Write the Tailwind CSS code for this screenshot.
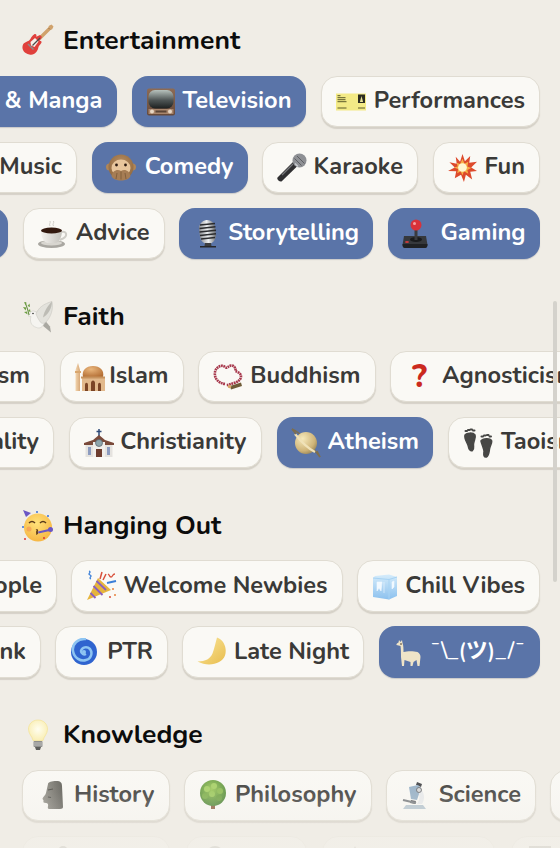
<!DOCTYPE html>
<html>
<head>
<meta charset="utf-8">
<script src="https://cdn.jsdelivr.net/npm/@tailwindcss/browser@4"></script>
</head>
<body class="bg-[#f0ede6]">
<svg class="absolute w-0 h-0" aria-hidden="true"><defs>
<linearGradient id="screen" x1="0" y1="0" x2="0" y2="1"><stop offset="0" stop-color="#b7c2bd"/><stop offset="0.55" stop-color="#4e5555"/><stop offset="1" stop-color="#1d2020"/></linearGradient>
<linearGradient id="wood" x1="0" y1="0" x2="0" y2="1"><stop offset="0" stop-color="#8d6b55"/><stop offset="1" stop-color="#66493a"/></linearGradient>
<radialGradient id="dome" cx="0.4" cy="0.3" r="0.8"><stop offset="0" stop-color="#eab67c"/><stop offset="1" stop-color="#b06a30"/></radialGradient>
<linearGradient id="tan" x1="0" y1="0" x2="1" y2="0"><stop offset="0" stop-color="#f3d5ae"/><stop offset="1" stop-color="#d7a878"/></linearGradient>
<radialGradient id="planet" cx="0.35" cy="0.3" r="0.85"><stop offset="0" stop-color="#f6e9bb"/><stop offset="0.65" stop-color="#cfb478"/><stop offset="1" stop-color="#85744a"/></radialGradient>
<radialGradient id="face" cx="0.45" cy="0.35" r="0.75"><stop offset="0" stop-color="#ffe27a"/><stop offset="1" stop-color="#f5b03c"/></radialGradient>
<linearGradient id="ice" x1="0" y1="0" x2="0" y2="1"><stop offset="0" stop-color="#d5ecfb"/><stop offset="1" stop-color="#8cc1ee"/></linearGradient>
<linearGradient id="moon" x1="0" y1="0" x2="1" y2="1"><stop offset="0" stop-color="#fbe9a0"/><stop offset="1" stop-color="#e8bc4c"/></linearGradient>
<radialGradient id="bulb" cx="0.5" cy="0.45" r="0.6"><stop offset="0" stop-color="#fffef0"/><stop offset="1" stop-color="#f9edb0"/></radialGradient>
<linearGradient id="stone" x1="0" y1="0" x2="1" y2="0"><stop offset="0" stop-color="#94928a"/><stop offset="1" stop-color="#5b5a54"/></linearGradient>
<radialGradient id="tree" cx="0.45" cy="0.35" r="0.75"><stop offset="0" stop-color="#9cc858"/><stop offset="1" stop-color="#3f7a2f"/></radialGradient>
<radialGradient id="monkey" cx="0.5" cy="0.4" r="0.7"><stop offset="0" stop-color="#bd9468"/><stop offset="1" stop-color="#8a6238"/></radialGradient>
<linearGradient id="mic" x1="0" y1="0" x2="1" y2="0"><stop offset="0" stop-color="#8e9094"/><stop offset="0.5" stop-color="#eef0f2"/><stop offset="1" stop-color="#6d6f73"/></linearGradient>
<linearGradient id="cup" x1="0" y1="0" x2="1" y2="0"><stop offset="0" stop-color="#f4f2ee"/><stop offset="1" stop-color="#c4c2bc"/></linearGradient>
</defs></svg>

<main class="relative w-[560px] h-[848px] overflow-hidden bg-[#f0ede6] font-['Nunito','Noto_Sans','Noto_Sans_CJK_JP',sans-serif] pt-[22px]">

  <section>
    <h2 class="flex items-center h-9 mb-[18px] pl-[22px] gap-[9px] text-[26.500px] font-bold text-[#0c0c0c]">
      <svg class="w-8 h-8 shrink-0" viewBox="0 0 32 32"><path d="M31.500 2.500L29.500.5l-2.500 1.300-.8 1.700L16 13.500l2.500 2.500L28.500 6l1.700-.8z" fill="#d0a26c"/><path d="M27 4.500l.7.7" stroke="#6b4a2a" stroke-width="1"/><path d="M12 10.500c1.700-1.200 3 .3 2.300 2.200l3.700-1.700 2 2-2.500 3.800c1.700-.3 2.600 1 1.800 2.300-1.100 1.900-2.500 2.200-3 4.700-.7 3.300-3.500 8-9 6.700C2.500 29.500 0 26 .5 22.500c.5-4 3.800-4.500 5.800-5.500C8.800 15.700 9 12.500 12 10.500z" fill="#e0403c"/><path d="M8.500 18l4.500-4 3.500 3.500-4 5.500-3.500-1.500z" fill="#f7f1ea"/><path d="M10.500 21.500L18 14" stroke="#4b4b4b" stroke-width="1.200"/><path d="M6 20l5.500 5.500" stroke="#8c8c8c" stroke-width="1.600"/></svg>
      <span class="pt-[2px]">Entertainment</span>
    </h2>
    <div class="flex flex-col gap-[15px]">
      <div class="flex gap-[15px] -ml-[150px]">
        <div class="flex items-center justify-end shrink-0 w-[266.500px] h-[51px] rounded-[16px] bg-[#5a74a8] text-white px-[14px] text-[23.600px] font-bold whitespace-nowrap shadow-[0_1px_1px_rgba(50,60,90,0.2)]"><span class="pb-[1px]">Anime &amp; Manga</span></div>
        <div class="flex items-center justify-between shrink-0 w-[174px] h-[51px] rounded-[16px] bg-[#5a74a8] text-white px-[14px] text-[23.600px] font-bold whitespace-nowrap shadow-[0_1px_1px_rgba(50,60,90,0.2)]">
          <svg class="w-[30px] h-[30px] shrink-0" viewBox="0 0 30 30"><rect x="1" y="1.500" width="28" height="27" rx="2" fill="url(#wood)"/><rect x="2.500" y="3" width="25" height="18.500" rx="6.500" fill="url(#screen)"/><rect x="2.500" y="22" width="25" height="5" fill="#a9866c"/><circle cx="6" cy="24.500" r="2" fill="#e7d6c3"/><circle cx="24" cy="24.500" r="2" fill="#e7d6c3"/><rect x="9.500" y="23.500" width="11" height="2" fill="#5a4436"/></svg>
          <span class="pb-[1px]">Television</span>
        </div>
        <div class="flex items-center justify-between shrink-0 w-[219.500px] h-[51px] rounded-[16px] border border-[#e0dcd2] bg-[#faf9f5] text-[#3a3a38] px-[14px] text-[23.600px] font-bold whitespace-nowrap shadow-[0_2px_1px_rgba(120,110,90,0.22)]">
          <svg class="w-[30px] h-[30px] shrink-0" viewBox="0 0 30 30"><rect x="0" y="6.500" width="30" height="17" fill="#f3ea86"/><rect x="22" y="7.500" width="7" height="8.500" fill="#2c2c22"/><path d="M25.500 9l-1.600 6h3.200z" fill="#e8e39a"/><path d="M1.500 8.700h3M1.500 10.700h8M1.500 12.700h8M1.500 14.700h9M1.500 21h9M22 21h7" stroke="#5c5a2a" stroke-width="1"/></svg>
          <span class="pb-[1px]">Performances</span>
        </div>
      </div>

      <div class="flex gap-[14.500px] -ml-[60px]">
        <div class="flex items-center justify-end shrink-0 w-[137px] h-[51px] rounded-[16px] border border-[#e0dcd2] bg-[#faf9f5] text-[#3a3a38] px-[14px] text-[23.600px] font-bold whitespace-nowrap shadow-[0_2px_1px_rgba(120,110,90,0.22)]"><span class="pb-[1px]">Music</span></div>
        <div class="flex items-center justify-between shrink-0 w-[156px] h-[51px] rounded-[16px] bg-[#5a74a8] text-white px-[14px] text-[23.600px] font-bold whitespace-nowrap shadow-[0_1px_1px_rgba(50,60,90,0.2)]">
          <svg class="w-[30px] h-[30px] shrink-0" viewBox="0 0 30 30"><circle cx="3.500" cy="14" r="3.500" fill="#b08658"/><circle cx="26.500" cy="14" r="3.500" fill="#b08658"/><circle cx="15" cy="14" r="12.500" fill="url(#monkey)"/><ellipse cx="15" cy="15" rx="9.500" ry="8.500" fill="#e8c69c"/><circle cx="10.500" cy="12" r="1.400" fill="#2b1a10"/><circle cx="19.500" cy="12" r="1.400" fill="#2b1a10"/><path d="M5.500 23c1-5 5.500-7.500 9.500-5 4-2.500 8.500 0 9.500 5-2 6-17 6-19 0z" fill="#a67d54"/><path d="M15 18.500v8M11 20l-1 6M19 20l1 6" stroke="#7a5836" stroke-width=".8"/></svg>
          <span class="pb-[1px]">Comedy</span>
        </div>
        <div class="flex items-center justify-between shrink-0 w-[156px] h-[51px] rounded-[16px] border border-[#e0dcd2] bg-[#faf9f5] text-[#3a3a38] px-[14px] text-[23.600px] font-bold whitespace-nowrap shadow-[0_2px_1px_rgba(120,110,90,0.22)]">
          <svg class="w-[30px] h-[30px] shrink-0" viewBox="0 0 30 30"><path d="M17 8L.5 24.500c-.8 1.500 1.500 4.500 4 4L21 12.500z" fill="#2f2f31"/><path d="M16 11L5 22" stroke="#77787b" stroke-width="1.200"/><circle cx="22.500" cy="7.500" r="7" fill="#8e9094"/><path d="M17.500 5.500l7 7M20 3l7.500 7.500" stroke="#5d5f63" stroke-width="1"/><path d="M18 10.500l3 3" stroke="#c9ccd0" stroke-width="1.500"/></svg>
          <span class="pb-[1px]">Karaoke</span>
        </div>
        <div class="flex items-center justify-between shrink-0 w-[107.500px] h-[51px] rounded-[16px] border border-[#e0dcd2] bg-[#faf9f5] text-[#3a3a38] px-[14px] text-[23.600px] font-bold whitespace-nowrap shadow-[0_2px_1px_rgba(120,110,90,0.22)]">
          <svg class="w-[29px] h-[29px] shrink-0" viewBox="0 0 30 30"><path d="M15 1l2.500 7.500L23 3l-1 7 8-1-6 6 6 3.500-7 1 2 8-6.500-5-2 7.500-3-7.500L7 26l1.500-7L0 18.500 7 15 1.500 9.500 9 11 8 4l4.500 5z" fill="#dd4a2c"/><path d="M15 6l2 5 4-2-1 5 4 1.500-4 2 1 4-4.500-2.500-1.500 4-2-4-3.500 2 1-4.500L6 15l4-1-1-4 3.500 1.500z" fill="#f7b048"/><circle cx="15" cy="15" r="4.500" fill="#fff6d0"/></svg>
          <span class="pb-[1px]">Fun</span>
        </div>
      </div>

      <div class="flex gap-[14.500px] -ml-[100px]">
        <div class="shrink-0 w-[108px] h-[51px] rounded-[16px] bg-[#5a74a8] shadow-[0_1px_1px_rgba(50,60,90,0.2)]"></div>
        <div class="flex items-center justify-between shrink-0 w-[142px] h-[51px] rounded-[16px] border border-[#e0dcd2] bg-[#faf9f5] text-[#3a3a38] px-[14px] text-[23.600px] font-bold whitespace-nowrap shadow-[0_2px_1px_rgba(120,110,90,0.22)]">
          <svg class="w-[30px] h-[30px] shrink-0" viewBox="0 0 30 30"><ellipse cx="13.500" cy="25" rx="13.500" ry="4" fill="#a9a7a1"/><ellipse cx="13.500" cy="24" rx="10.500" ry="2.500" fill="#d8d6d0"/><path d="M3 11.500h21c0 6.500-3 12-6.500 12.500h-8C6 23.500 3 18 3 11.500z" fill="url(#cup)"/><path d="M24 13c4.500-1.500 6 4 1 6.500l-3.500 1.500" fill="none" stroke="#cfcdc7" stroke-width="2"/><ellipse cx="13.500" cy="11.500" rx="10.500" ry="3" fill="#33190e"/><path d="M12 7c-1.500-2 1-3 0-5M15.500 7c-1.500-2 1-3 0-5" stroke="#d0cec8" stroke-width="1" fill="none"/></svg>
          <span class="pb-[1px]">Advice</span>
        </div>
        <div class="flex items-center justify-between shrink-0 w-[194px] h-[51px] rounded-[16px] bg-[#5a74a8] text-white px-[14px] text-[23.600px] font-bold whitespace-nowrap shadow-[0_1px_1px_rgba(50,60,90,0.2)]">
          <svg class="w-[30px] h-[30px] shrink-0" viewBox="0 0 30 30"><rect x="6.500" y="1" width="16" height="24" rx="8" transform="rotate(-6 14 13)" fill="url(#mic)"/><path d="M7 6l15-1.500M6.500 9.500l16-1.700M6.500 13l16.500-1.700M7 16.500l16-1.700M8 20l14-1.500" stroke="#2b2c2f" stroke-width="1.600"/><path d="M12 24h6l.5 3h-7z" fill="#3c3d40"/><rect x="7" y="27" width="16" height="1.500" fill="#26272a"/></svg>
          <span class="pb-[1px]">Storytelling</span>
        </div>
        <div class="flex items-center justify-between shrink-0 w-[152px] h-[51px] rounded-[16px] bg-[#5a74a8] text-white px-[14px] text-[23.600px] font-bold whitespace-nowrap shadow-[0_1px_1px_rgba(50,60,90,0.2)]">
          <svg class="w-[26px] h-[30px] shrink-0" viewBox="0 0 26 30"><path d="M2 17h22l1.500 9c0 2-1 3-2.500 3H3c-1.500 0-2.500-1-2.500-3z" fill="#36383c"/><path d="M.5 25h25c0 2.500-1 4-2.500 4H3c-1.500 0-2.500-1.500-2.500-4z" fill="#202124"/><ellipse cx="14" cy="20.500" rx="6" ry="2.500" fill="#1a1b1d"/><rect x="12.500" y="8" width="3" height="13" fill="#3a3b3f"/><circle cx="14" cy="6" r="5.500" fill="#d9323a"/><circle cx="12.500" cy="4.500" r="1.500" fill="#f7a0a0"/><ellipse cx="5" cy="23" rx="2" ry="1" fill="#cf3b3b"/></svg>
          <span class="pb-[1px]">Gaming</span>
        </div>
      </div>
    </div>
  </section>

  <section class="mt-[39.500px]">
    <h2 class="flex items-center h-9 mb-[16.500px] pl-[22px] gap-[9px] text-[26.500px] font-bold text-[#0c0c0c]">
      <svg class="w-8 h-8 shrink-0" viewBox="0 0 32 32"><path d="M20 24l9 7.500-1-6-5-6z" fill="#a9a8a1"/><path d="M8 13c0-2.500 3-4 5-2.500 2 1 4 1.500 6 2.500 4 2 5 6 3 10-1.500 3-4 5-7.500 3.500C9 25 7.500 20 9 15.500L6 15z" fill="#f5f4f0" stroke="#cfcec7" stroke-width=".6"/><path d="M14 13C16 7 22 2.500 30 .5c1.500 7.500-1 15.500-6 20.500-2 2-5 1.500-6-.5-1.500-2-3-5-4-7.500z" fill="#e3e2dc" stroke="#c9c8c1" stroke-width=".6"/><path d="M30 .5c-3 3-8 9-9 16 5-3 9-9 9-16z" fill="#bdbcb5"/><circle cx="11" cy="12.500" r=".8" fill="#333"/><path d="M3 1l2.500 7 1.500 6" stroke="#5e8a3a" stroke-width="1" fill="none"/><path d="M2 1.500l2.500 0-.5 3zM1 6l3.500.5-1 3zM7.500 2.500l.5 3.500-2.500-1zM8 8l.5 3-2.500-1zM2 11l3-.5.5 3z" fill="#6fa044"/></svg>
      <span>Faith</span>
    </h2>
    <div class="flex flex-col gap-[15px]">
      <div class="flex gap-[14.500px] -ml-[100px]">
        <div class="flex items-center justify-end shrink-0 w-[145px] h-[51px] rounded-[16px] border border-[#e0dcd2] bg-[#faf9f5] text-[#3a3a38] px-[14px] text-[23.600px] font-bold whitespace-nowrap shadow-[0_2px_1px_rgba(120,110,90,0.22)]"><span class="pb-[1px]">Judaism</span></div>
        <div class="flex items-center justify-between shrink-0 w-[124px] h-[51px] rounded-[16px] border border-[#e0dcd2] bg-[#faf9f5] text-[#3a3a38] px-[14px] text-[23.600px] font-bold whitespace-nowrap shadow-[0_2px_1px_rgba(120,110,90,0.22)]">
          <svg class="w-[30px] h-[30px] shrink-0" viewBox="0 0 30 30"><path d="M3 1l2 7v21H.5V8z" fill="url(#tan)"/><rect x="0" y="9" width="6" height="2" fill="#d9a66d"/><rect x="7" y="15" width="23" height="14" fill="#e2b98c"/><path d="M8 15c-1.500-7 3-11 10-11s11.500 4 10 11z" fill="url(#dome)"/><rect x="6" y="14.500" width="24" height="2" fill="#c7935e"/><path d="M10 29v-6c0-3 3-3 3 0v6zM16 29v-8c0-3.500 4-3.500 4 0v8zM23 29v-6c0-3 3-3 3 0v6z" fill="#7b4526"/></svg>
          <span class="pb-[1px]">Islam</span>
        </div>
        <div class="flex items-center justify-between shrink-0 w-[177.500px] h-[51px] rounded-[16px] border border-[#e0dcd2] bg-[#faf9f5] text-[#3a3a38] px-[14px] text-[23.600px] font-bold whitespace-nowrap shadow-[0_2px_1px_rgba(120,110,90,0.22)]">
          <svg class="w-[30px] h-[30px] shrink-0" viewBox="0 0 30 30"><path d="M12 22C5 21 1 16 2 10c1-5 7-8 10-5 2 2 3-1 6-1.500 3-.5 5 3 4.500 5.500 2 1 5.500 2 5.500 5.500 0 3-3 5.500-7 6.500-3 1-5.500 2-7.500 2" fill="none" stroke="#a7384c" stroke-width="2.600" stroke-dasharray="1.800 .6"/><path d="M17 24l11-3.500 1 3.500-11 3.500z" fill="#6f5c38"/><circle cx="16.500" cy="24.500" r="1.800" fill="#d9a86b"/></svg>
          <span class="pb-[1px]">Buddhism</span>
        </div>
        <div class="flex items-center shrink-0 w-[230px] h-[51px] rounded-[16px] border border-[#e0dcd2] bg-[#faf9f5] text-[#3a3a38] pl-[21px] text-[23.600px] font-bold whitespace-nowrap shadow-[0_2px_1px_rgba(120,110,90,0.22)]">
          <span class="text-[#cb2a1e] text-[32px] font-extrabold w-[30px] shrink-0">?</span>
          <span class="shrink-0 pb-[1px]">Agnosticism</span>
        </div>
      </div>
      <div class="flex gap-[15px] -ml-[100px]">
        <div class="flex items-center justify-end shrink-0 w-[154px] h-[51px] rounded-[16px] border border-[#e0dcd2] bg-[#faf9f5] text-[#3a3a38] px-[14px] text-[23.600px] font-bold whitespace-nowrap shadow-[0_2px_1px_rgba(120,110,90,0.22)]"><span class="pb-[1px]">Spirituality</span></div>
        <div class="flex items-center justify-between shrink-0 w-[192.500px] h-[51px] rounded-[16px] border border-[#e0dcd2] bg-[#faf9f5] text-[#3a3a38] px-[14px] text-[23.600px] font-bold whitespace-nowrap shadow-[0_2px_1px_rgba(120,110,90,0.22)]">
          <svg class="w-[30px] h-[30px] shrink-0" viewBox="0 0 30 30"><path d="M15 1v7M12.500 3.500h5" stroke="#2e4a78" stroke-width="1.500"/><path d="M0 15l9-3 6-5 6 5 9 3v2H0z" fill="#7a4a3a"/><rect x="1.500" y="17" width="27" height="12" fill="#e5e3df"/><rect x="9" y="14" width="12" height="15" fill="#f1efec"/><circle cx="15" cy="15" r="3.500" fill="#8fa6ad" stroke="#55606a" stroke-width=".7"/><rect x="12" y="21" width="6" height="8" fill="#6d3d2f"/><path d="M4 19h3v8H4zM23 19h3v8h-3z" fill="#8d9cc0"/></svg>
          <span class="pb-[1px]">Christianity</span>
        </div>
        <div class="flex items-center justify-between shrink-0 w-[156.500px] h-[51px] rounded-[16px] bg-[#5a74a8] text-white px-[14px] text-[23.600px] font-bold whitespace-nowrap shadow-[0_1px_1px_rgba(50,60,90,0.2)]">
          <svg class="w-[30px] h-[30px] shrink-0" viewBox="0 0 30 30"><path d="M1 1c5 2 12 8 15 12s10 12 13 16" fill="none" stroke="#7d6e4e" stroke-width="1.500"/><circle cx="15" cy="15" r="11" fill="url(#planet)"/><path d="M4 6c4 5 12 14 20 18" fill="none" stroke="#f0e2b8" stroke-width="2.200"/><path d="M26 23l3 6M1 1l4 5" stroke="#7d6e4e" stroke-width="1.500"/></svg>
          <span class="pb-[1px]">Atheism</span>
        </div>
        <div class="flex items-center shrink-0 w-[150px] h-[51px] rounded-[16px] border border-[#e0dcd2] bg-[#faf9f5] text-[#3a3a38] pl-[14px] text-[23.600px] font-bold whitespace-nowrap shadow-[0_2px_1px_rgba(120,110,90,0.22)]">
          <svg class="w-[30px] h-[30px] shrink-0" viewBox="0 0 30 30"><path d="M2 7c1-2 8-3 10 0 1 3-1 5-1.500 9-.3 2.500 1 5-1 6.500-2 1-3.500-1-4-3.500C5 15 1 12 2 7z" fill="#474745" stroke="#474745" stroke-width="1.500"/><path d="M18 13c2-3 9-3 10.500-.5 1 2-1.500 5-2 8.500-.5 3-.5 7-3 8-2.500.5-3-2-2.500-4.500.5-3-2-7-3-11.500z" fill="#474745" stroke="#474745" stroke-width="1.500"/><path d="M2.500 3h1.500M5 2h1.500M7.500 1.500h1.500M10 2.500h1.500M18.500 8.500h1.500M21 7.500h1.500M24 7h1.500M26.500 8.500h1.500" stroke="#474745" stroke-width="2" stroke-linecap="round"/></svg>
          <span class="shrink-0 ml-[8px] pb-[1px]">Taoism</span>
        </div>
      </div>
    </div>
  </section>

  <section class="mt-[39.500px]">
    <h2 class="flex items-center h-9 mb-[16.500px] pl-[22px] gap-[9px] text-[26.500px] font-bold text-[#0c0c0c]">
      <svg class="w-8 h-8 shrink-0" viewBox="0 0 32 32"><circle cx="16" cy="17.500" r="14" fill="url(#face)"/><path d="M1 0l8 3-5 4z" fill="#6a56c4"/><path d="M7 13c2-2 4-2 6 0M18 13c2-2 4-2 6 0" stroke="#5b3a1a" stroke-width="1.500" fill="none"/><path d="M14 20c2-1 2 2 0 2 2 0 2 2 0 2" stroke="#5b3a1a" stroke-width="1.300" fill="none"/><path d="M16 21.500l11-2.500.5 2-11 2.500z" fill="#6a56c4"/><circle cx="28.500" cy="19.500" r="2.500" fill="#6a56c4"/><circle cx="7" cy="19" r="2.500" fill="#f0734e" fill-opacity=".4"/><circle cx="3" cy="29" r="1" fill="#d33"/><circle cx="22" cy="28" r="1" fill="#d33"/><circle cx="26" cy="6" r="1" fill="#3a6fd8"/><circle cx="15" cy="2" r="1" fill="#3a6fd8"/><circle cx="1" cy="17" r="1" fill="#3a6fd8"/></svg>
      <span>Hanging Out</span>
    </h2>
    <div class="flex flex-col gap-[14.500px]">
      <div class="flex gap-[14px] -ml-[100px]">
        <div class="flex items-center justify-end shrink-0 w-[157px] h-[51.500px] rounded-[16px] border border-[#e0dcd2] bg-[#faf9f5] text-[#3a3a38] px-[14px] text-[23.600px] font-bold whitespace-nowrap shadow-[0_2px_1px_rgba(120,110,90,0.22)]"><span class="pb-[1px]">People</span></div>
        <div class="flex items-center justify-between shrink-0 w-[271.500px] h-[51.500px] rounded-[16px] border border-[#e0dcd2] bg-[#faf9f5] text-[#3a3a38] px-[14px] text-[23.600px] font-bold whitespace-nowrap shadow-[0_2px_1px_rgba(120,110,90,0.22)]">
          <svg class="w-[32px] h-[32px] shrink-0" viewBox="0 0 32 32"><path d="M1 30L12 8l13 12z" fill="#e6b53c"/><path d="M4.500 23l5 5M7.500 16l9 9M10.500 11l9.500 9" stroke="#8a5fc0" stroke-width="1.800"/><path d="M3 1c3 1-2 3 1 4s-2 3 1 4" stroke="#3b7fd8" stroke-width="1.300" fill="none"/><path d="M14 9l2-7M17 10l3-6" stroke="#d8503b" stroke-width="1.500"/><path d="M22 4c2 1 1 3 3 3s1-3 4-3" stroke="#d8503b" stroke-width="1.300" fill="none"/><path d="M21 13l9-2" stroke="#3b7fd8" stroke-width="1.800"/><circle cx="27" cy="19" r="1" fill="#e6823c"/><circle cx="29" cy="25" r="1" fill="#e6823c"/><circle cx="24" cy="27" r="1" fill="#d8503b"/></svg>
          <span class="pb-[1px]">Welcome Newbies</span>
        </div>
        <div class="flex items-center justify-between shrink-0 w-[183.500px] h-[51.500px] rounded-[16px] border border-[#e0dcd2] bg-[#faf9f5] text-[#3a3a38] px-[14px] text-[23.600px] font-bold whitespace-nowrap shadow-[0_2px_1px_rgba(120,110,90,0.22)]">
          <svg class="w-[26px] h-[30px] shrink-0" viewBox="0 0 26 30"><path d="M3 5l14-1.500L25 6v19l-8 3.500L1 26V7z" fill="url(#ice)"/><path d="M1 7l16 1.500L25 6M17 8.500v20" stroke="#a7d3f3" stroke-width="1" fill="none"/><path d="M5 11v9l2-3 2 3 1-9zM12 11v11M20 11v7l2-2v-6z" fill="#f1f9ff" stroke="#f1f9ff" stroke-width=".6"/></svg>
          <span class="pb-[1px]">Chill Vibes</span>
        </div>
      </div>
      <div class="flex gap-[14px] -ml-[100px]">
        <div class="flex items-center justify-end shrink-0 w-[141px] h-[51.500px] rounded-[16px] border border-[#e0dcd2] bg-[#faf9f5] text-[#3a3a38] px-[14px] text-[23.600px] font-bold whitespace-nowrap shadow-[0_2px_1px_rgba(120,110,90,0.22)]"><span class="pb-[1px]">Drink</span></div>
        <div class="flex items-center justify-between shrink-0 w-[113px] h-[51.500px] rounded-[16px] border border-[#e0dcd2] bg-[#faf9f5] text-[#3a3a38] px-[14px] text-[23.600px] font-bold whitespace-nowrap shadow-[0_2px_1px_rgba(120,110,90,0.22)]">
          <svg class="w-[28px] h-[28px] shrink-0" viewBox="0 0 28 28"><circle cx="14" cy="14" r="13" fill="#2f64cf"/><path d="M16 1c-8-1-14 5-13 12 1 7 8 11 13 9 5-1 7-7 4-11-3-3-8-2-9 2 0 3 3 4 5 3" fill="none" stroke="#8ec5f2" stroke-width="2.500"/><circle cx="14" cy="14" r="2" fill="#8ec5f2"/></svg>
          <span class="pb-[1px]">PTR</span>
        </div>
        <div class="flex items-center justify-between shrink-0 w-[182px] h-[51.500px] rounded-[16px] border border-[#e0dcd2] bg-[#faf9f5] text-[#3a3a38] px-[14px] text-[23.600px] font-bold whitespace-nowrap shadow-[0_2px_1px_rgba(120,110,90,0.22)]">
          <svg class="w-[30px] h-[30px] shrink-0" viewBox="0 0 30 30"><path d="M20 .5c8 3 10 12 8 18-3 8-16 12-27.500 6 8 0 13-3 15-8 2-5 3-11 4.500-16z" fill="url(#moon)"/></svg>
          <span class="pb-[1px]">Late Night</span>
        </div>
        <div class="flex items-center justify-between shrink-0 ml-[1px] w-[160.500px] h-[51.500px] rounded-[16px] bg-[#5a74a8] text-white pl-[16px] pr-[14px] text-[22px] font-semibold whitespace-nowrap shadow-[0_1px_1px_rgba(50,60,90,0.2)]">
          <svg class="w-[26px] h-[30px] shrink-0" viewBox="0 0 26 30"><path d="M4 3l1.500 2L7 3l.5 3c1 2 1 7 1 9 4-1 10-1 14 0 2 1 3 3 3 5l-1 9h-2l-1-6-3 2-1 4h-2v-4l-6-2-.5 6h-2l-1-9c0-4 0-8-.5-11L1.500 8c-.5-1 1-2 2-2.500z" fill="#efe4c8"/><circle cx="6" cy="7" r=".8" fill="#3c2f20"/></svg>
          <span class="pb-[1px]">¯\_(ツ)_/¯</span>
        </div>
      </div>
    </div>
  </section>

  <section class="mt-[39.500px]">
    <h2 class="flex items-center h-9 mb-[16.500px] pl-[22px] gap-[9px] text-[26.500px] font-bold text-[#0c0c0c]">
      <svg class="w-8 h-8 shrink-0" viewBox="0 0 32 32"><path d="M16 1c-6 0-9.500 4.500-9.500 9 0 5 3.500 7 4.500 11.500h10c1-4.500 4.500-6.500 4.500-11.500 0-4.500-3.500-9-9.500-9z" fill="url(#bulb)" stroke="#f3e08c" stroke-width=".6"/><rect x="11.500" y="22" width="9" height="6" rx="1" fill="#8e8e8c"/><path d="M11.500 24h9M11.500 26h9" stroke="#d2d2d0" stroke-width=".8"/><path d="M13 28h6l-1 3h-4z" fill="#5e5e5c"/></svg>
      <span>Knowledge</span>
    </h2>
    <div class="flex flex-col gap-[14.500px]">
      <div class="flex gap-[14px] pl-[22px]">
        <div class="flex items-center justify-between shrink-0 w-[147.500px] h-[51.500px] rounded-[16px] border border-[#e0dcd2] bg-[#faf9f5] text-[#3a3a38] px-[14px] text-[23.600px] font-bold whitespace-nowrap shadow-[0_2px_1px_rgba(120,110,90,0.22)]">
          <svg class="w-[30px] h-[30px] shrink-0" viewBox="0 0 30 30"><path d="M11 4c0-2 4-3 8-3 5 0 6 2 6 5l1 21c0 1-1 2-3 2H12c-1 0-1.500-1-1-3 .5-1 0-3-2-3-2.500 0-3-1-2.500-2 .2-1-1-1.500-1-2.500 1-2 3-3.500 3.500-5.500z" fill="url(#stone)"/><path d="M11 10l5-1M11 17l3 .5" stroke="#4a4944" stroke-width="1.200"/></svg>
          <span class="pb-[1px]">History</span>
        </div>
        <div class="flex items-center justify-between shrink-0 w-[188px] h-[51.500px] rounded-[16px] border border-[#e0dcd2] bg-[#faf9f5] text-[#3a3a38] px-[14px] text-[23.600px] font-bold whitespace-nowrap shadow-[0_2px_1px_rgba(120,110,90,0.22)]">
          <svg class="w-[28px] h-[30px] shrink-0" viewBox="0 0 28 30"><rect x="12" y="20" width="4" height="9" fill="#8a5a3a"/><circle cx="14" cy="13" r="13" fill="url(#tree)"/><circle cx="8" cy="9" r="3" fill="#a4cf62"/><circle cx="15" cy="6" r="3" fill="#a4cf62"/><circle cx="21" cy="11" r="3" fill="#8cbb50"/><circle cx="13" cy="14" r="3" fill="#9ac85a"/><circle cx="6" cy="16" r="3" fill="#7cae48"/><circle cx="20" cy="18" r="3" fill="#6da040"/></svg>
          <span class="pb-[1px]">Philosophy</span>
        </div>
        <div class="flex items-center justify-between shrink-0 w-[150.500px] h-[51.500px] rounded-[16px] border border-[#e0dcd2] bg-[#faf9f5] text-[#3a3a38] px-[14px] text-[23.600px] font-bold whitespace-nowrap shadow-[0_2px_1px_rgba(120,110,90,0.22)]">
          <svg class="w-[26px] h-[30px] shrink-0" viewBox="0 0 26 30"><path d="M16 2l5 2-1 3-5-2z" fill="#3c3e42"/><path d="M8 7l9-2 3 3-4 12-6-1z" fill="#94afc6"/><path d="M10 20l5 1-1 3-5-1z" fill="#55585c"/><path d="M19 9c5 3 5 11 2 15h-5c3-4 3-9 1-13z" fill="#e8eaec"/><circle cx="18" cy="10" r="2.500" fill="#d6d8da" stroke="#55585c" stroke-width=".8"/><path d="M2 20l13 3" stroke="#767a7e" stroke-width="2"/><path d="M2 29l3-4h17l3 4z" fill="#b4c4cf"/></svg>
          <span class="pb-[1px]">Science</span>
        </div>
        <div class="shrink-0 w-[100px] h-[51.500px] rounded-[16px] border border-[#e0dcd2] bg-[#faf9f5] shadow-[0_2px_1px_rgba(120,110,90,0.22)]"></div>
      </div>
      <div class="flex gap-[15.500px] pl-[22px]">
        <div class="flex items-center shrink-0 w-[148px] h-[51.500px] rounded-[16px] border border-[#e0dcd2] bg-[#faf9f5] pl-[25px]"><svg class="w-[30px] h-[30px] shrink-0" viewBox="0 0 30 30"><circle cx="15" cy="5" r="5" fill="#8d8c86"/></svg></div>
        <div class="flex items-center shrink-0 w-[121px] h-[51.500px] rounded-[16px] border border-[#e0dcd2] bg-[#faf9f5] pl-[13px]"><svg class="w-[30px] h-[30px] shrink-0" viewBox="0 0 30 30"><circle cx="15" cy="9" r="9" fill="#8d8c86"/></svg></div>
        <div class="flex items-center shrink-0 w-[173px] h-[51.500px] rounded-[16px] border border-[#e0dcd2] bg-[#faf9f5] pl-[17px]"><svg class="w-[30px] h-[30px] shrink-0" viewBox="0 0 30 30"><path d="M15 0l2 5h-4z" fill="#8d8c86"/></svg></div>
        <div class="flex items-center shrink-0 w-[100px] h-[51.500px] rounded-[16px] border border-[#e0dcd2] bg-[#faf9f5] pl-[17px]"><svg class="w-[22px] h-[30px] shrink-0" viewBox="0 0 22 30"><rect x="0" y="0" width="22" height="8" fill="#8d8c86"/></svg></div>
      </div>
    </div>
  </section>

  <div class="absolute top-[301px] right-[3px] w-1 h-[281px] rounded-full bg-[#d4d2cc]"></div>
  <div class="absolute left-0 right-0 bottom-0 h-[93px] bg-[linear-gradient(to_bottom,#f0ede600_0%,#f0ede626_40%,#f0ede659_70%,#f0ede6d9_88%,#f0ede6d9_100%)] pointer-events-none"></div>
</main>
</body>
</html>
